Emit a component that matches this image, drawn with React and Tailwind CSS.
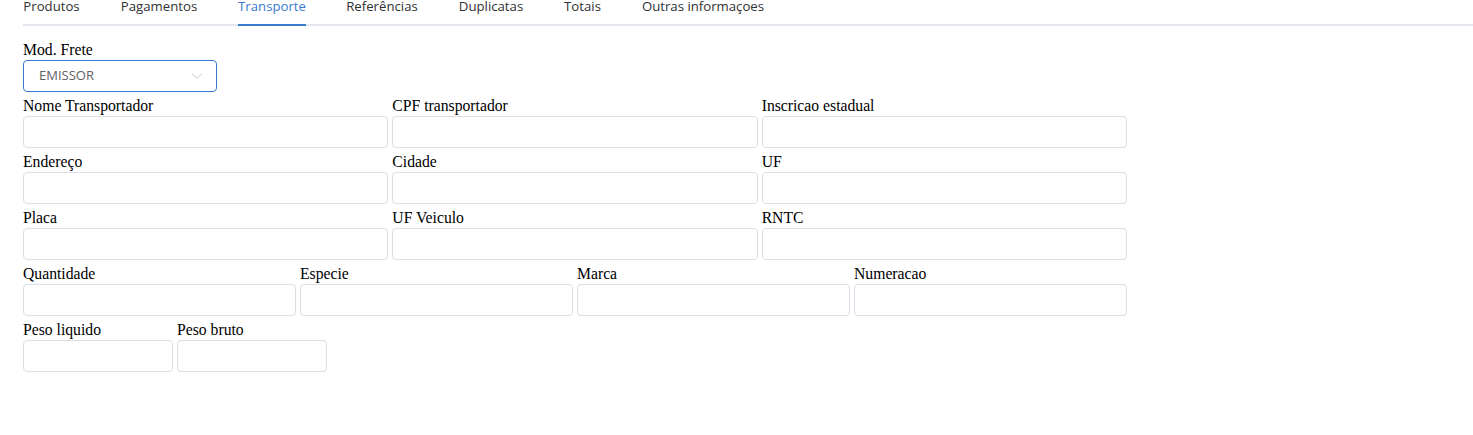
import React from "react";

const tabs = [
  { label: "Produtos", w: "w-[57px]" },
  { label: "Pagamentos", w: "w-[78px]" },
  { label: "Transporte", w: "w-[68px]", active: true },
  { label: "Referências", w: "w-[72px]" },
  { label: "Duplicatas", w: "w-[66px]" },
  { label: "Totais", w: "w-[37px]" },
  { label: "Outras informaçoes", w: "w-[124px]" },
];

function Field({ label, className = "" }) {
  return (
    <div className={"flex flex-col " + className}>
      <label className="block pt-[3px] leading-[21px] text-[15.7px] text-black whitespace-nowrap font-['Liberation_Serif',serif]">
        {label}
      </label>
      <input className="h-[32px] w-full rounded-[4px] border border-[#dcdfe6] bg-white outline-none" />
    </div>
  );
}

export default function App() {
  return (
    <div className="min-h-[435px] bg-white overflow-hidden">
      <div className="mt-[-4px] ml-[23px] flex gap-[40px] border-b-2 border-[#e4e7ed] font-['Open_Sans',sans-serif] text-[13.2px]">
        {tabs.map((t) => (
          <div
            key={t.label}
            className={
              t.w +
              " -mb-[2px] flex justify-center whitespace-nowrap leading-[20px] pb-[8px] border-b-2 " +
              (t.active
                ? "border-[#3a7bd0] text-[#3a7bd0]"
                : "border-transparent text-[#303133]")
            }
          >
            {t.label}
          </div>
        ))}
      </div>

      <div className="pl-[23px] pt-[10px] w-[1127px]">
        <div className="flex flex-col">
          <label className="block pt-[3px] leading-[21px] text-[15.7px] text-black font-['Liberation_Serif',serif]">
            Mod. Frete
          </label>
          <div className="relative flex h-[32px] w-[194px] items-center rounded-[4px] border border-[#3a7bd0] bg-white pl-[15px] pr-[12px]">
            <span className="text-[13px] text-[#606266] font-['Open_Sans',sans-serif]">EMISSOR</span>
            <svg
              className="ml-auto mr-[1px]"
              width="12"
              height="8"
              viewBox="0 0 12 8"
              fill="none"
            >
              <path d="M1 1.5 L6 6.5 L11 1.5" stroke="#c0c4cc" strokeWidth="1" />
            </svg>
          </div>
        </div>

        <div className="grid grid-cols-3 gap-x-[4px]">
          <Field label="Nome Transportador" />
          <Field label="CPF transportador" />
          <Field label="Inscricao estadual" />
          <Field label="Endereço" />
          <Field label="Cidade" />
          <Field label="UF" />
          <Field label="Placa" />
          <Field label="UF Veiculo" />
          <Field label="RNTC" />
        </div>

        <div className="grid grid-cols-4 gap-x-[4px]">
          <Field label="Quantidade" />
          <Field label="Especie" />
          <Field label="Marca" />
          <Field label="Numeracao" />
        </div>

        <div className="flex gap-x-[4px]">
          <Field label="Peso liquido" className="w-[150px]" />
          <Field label="Peso bruto" className="w-[150px]" />
        </div>
      </div>
    </div>
  );
}
